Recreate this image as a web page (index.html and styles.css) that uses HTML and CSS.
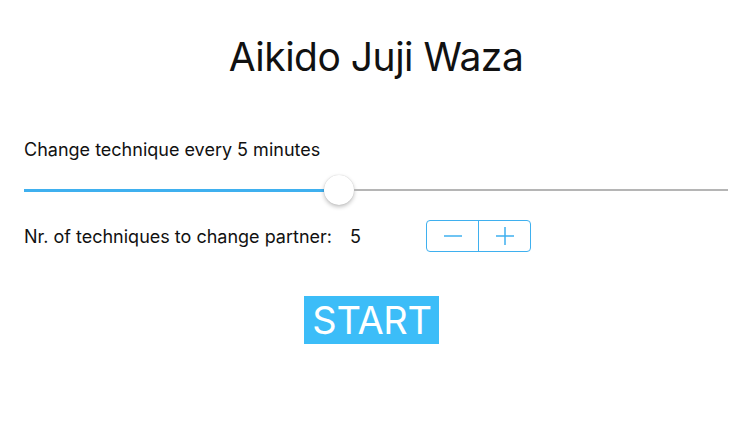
FILE: index.html
```html
<!DOCTYPE html>
<html>
<head>
<meta charset="utf-8">
<link rel="stylesheet" href="styles.css">
</head>
<body>
<div class="app">
  <h1 class="title">Aikido Juji Waza</h1>
  <div class="label">Change technique every 5 minutes</div>
  <div class="slider">
    <div class="track-fill"></div>
    <div class="thumb"></div>
    <div class="track-rest"></div>
  </div>
  <div class="row">
    <span class="row-label">Nr. of techniques to change partner:</span>
    <span class="row-value">5</span>
    <div class="stepper">
      <div class="step"><svg width="20" height="20" viewBox="0 0 20 20"><path d="M1 10H19" stroke="#3fb0ef" stroke-width="1.5"/></svg></div>
      <div class="step sep"><svg width="20" height="20" viewBox="0 0 20 20"><path d="M1 10H19M10 1V19" stroke="#3fb0ef" stroke-width="1.5"/></svg></div>
    </div>
  </div>
  <div class="start-wrap"><button class="start">START</button></div>
</div>
</body>
</html>
```
FILE: styles.css
```css
html, body { margin: 0; padding: 0; background: #fff; }
body { font-family: Inter, "Liberation Sans", sans-serif; color: #111; width: 750px; height: 422px; overflow: hidden; }
.app { padding: 0 22px 0 24px; }
.title { margin: 0; padding-top: 33px; height: 48px; line-height: 48px; font-size: 39px; font-weight: 400; text-align: center; letter-spacing: -0.5px; }
.label { margin-top: 58px; font-size: 18px; line-height: 22px; height: 22px; }
.slider { margin-top: 13px; height: 32px; display: flex; align-items: center; }
.track-fill { width: 300px; height: 3px; background: #3fb0ef; }
.thumb { width: 30px; height: 30px; border-radius: 50%; background: #fff; box-shadow: 0 2px 4px rgba(0,0,0,0.25), 0 0 1px rgba(0,0,0,0.2); flex: none; }
.track-rest { flex: 1; height: 2px; background: #b5b5b5; }
.row { margin-top: 14px; height: 32px; display: flex; align-items: center; font-size: 18px; }
.row-value { margin-left: 18px; width: 76px; }
.stepper { display: flex; width: 103px; height: 30px; border: 1px solid #3fb0ef; border-radius: 4px; }
.step { flex: 1; display: flex; align-items: center; justify-content: center; }
.step.sep { border-left: 1px solid #3fb0ef; }
.start-wrap { margin-top: 44px; display: flex; justify-content: center; padding-right: 9px; }
.start { font-family: inherit; border: none; background: #3cbdf8; color: #fff; font-size: 38px; letter-spacing: -0.3px; line-height: 48px; height: 48px; padding: 0 7px 0 8px; }
```
